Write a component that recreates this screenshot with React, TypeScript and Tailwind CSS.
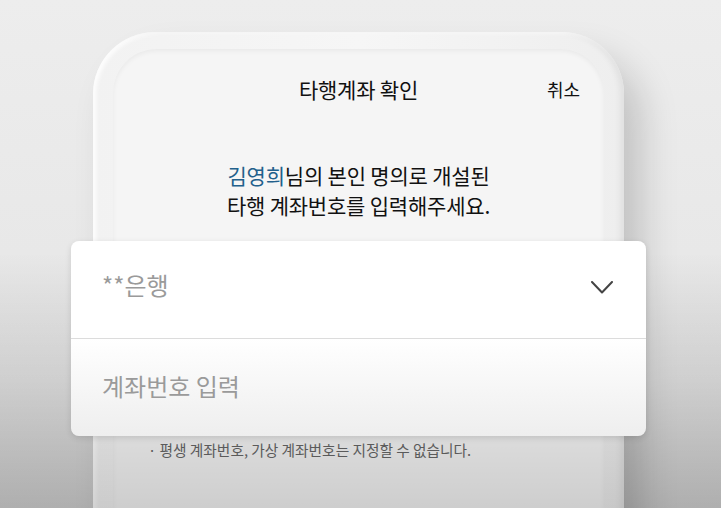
const font = { fontFamily: '"Noto Sans CJK KR", "Noto Sans", sans-serif' }

export default function App() {
  return (
    <div
      style={font}
      className="relative w-[721px] h-[508px] overflow-hidden bg-gradient-to-b from-[#ededed] via-[#e8e8e8] to-[#d0d0d0]"
    >
      {/* Phone frame */}
      <div className="ml-[93px] mt-[32px] w-[531px] h-[560px] rounded-[62px] bg-gradient-to-r from-[#f2f2f2] via-[#f6f6f6] to-[#eeeeee] px-[20px] pt-[17px] shadow-[18px_24px_36px_rgba(0,0,0,0.17),inset_-4px_0_6px_rgba(0,0,0,0.06),inset_3px_2px_4px_rgba(255,255,255,0.9)]">
        {/* Screen */}
        <div className="h-full rounded-[44px] bg-[#f5f5f5] pt-[26px] shadow-[inset_0_2px_5px_rgba(0,0,0,0.05)]">
          <div className="relative flex justify-center">
            <h1 className="text-[21px] leading-[28px] text-[#111] tracking-[-0.2px]">타행계좌 확인</h1>
            <button className="absolute right-[24px] top-0 text-[18px] leading-[28px] text-[#111]">취소</button>
          </div>

          <p className="mt-[57px] text-center text-[21px] leading-[30px] text-[#111] tracking-[-0.2px]">
            <span className="text-[#22608c]">김영희</span>님의 본인 명의로 개설된
            <br />
            타행 계좌번호를 입력해주세요.
          </p>

          <p className="mt-[220px] pl-[35px] text-[14.7px] leading-[20px] text-[#666]">
            · 평생 계좌번호, 가상 계좌번호는 지정할 수 없습니다.
          </p>
        </div>
      </div>

      {/* Bottom shading */}
      <div className="pointer-events-none absolute inset-x-0 top-[250px] bottom-0 bg-gradient-to-b from-transparent via-[rgba(0,0,0,0.06)] to-[rgba(0,0,0,0.16)]" />

      {/* Input card */}
      <div className="absolute left-[71px] top-[241px] w-[575px] h-[195px] rounded-[8px] bg-gradient-to-b from-white via-white to-[#eeeeee] shadow-[0_2px_6px_rgba(0,0,0,0.12)] flex flex-col">
        <div className="flex h-[98px] items-center justify-between pl-[31px] pr-[33px] border-b border-[#dcdcdc]">
          <span className="text-[24px] leading-[32px] text-[#9a9a9a] -mt-[10px]">**은행</span>
          <svg width="22" height="13" viewBox="0 0 22 13" fill="none" className="-mt-[5px]">
            <path d="M1 1 L11 11.5 L21 1" stroke="#444" strokeWidth="2" strokeLinecap="round" strokeLinejoin="round" />
          </svg>
        </div>
        <div className="flex flex-1 items-center pl-[31px]">
          <span className="text-[24px] leading-[32px] text-[#9a9a9a] -mt-[3px]">계좌번호 입력</span>
        </div>
      </div>
    </div>
  )
}
